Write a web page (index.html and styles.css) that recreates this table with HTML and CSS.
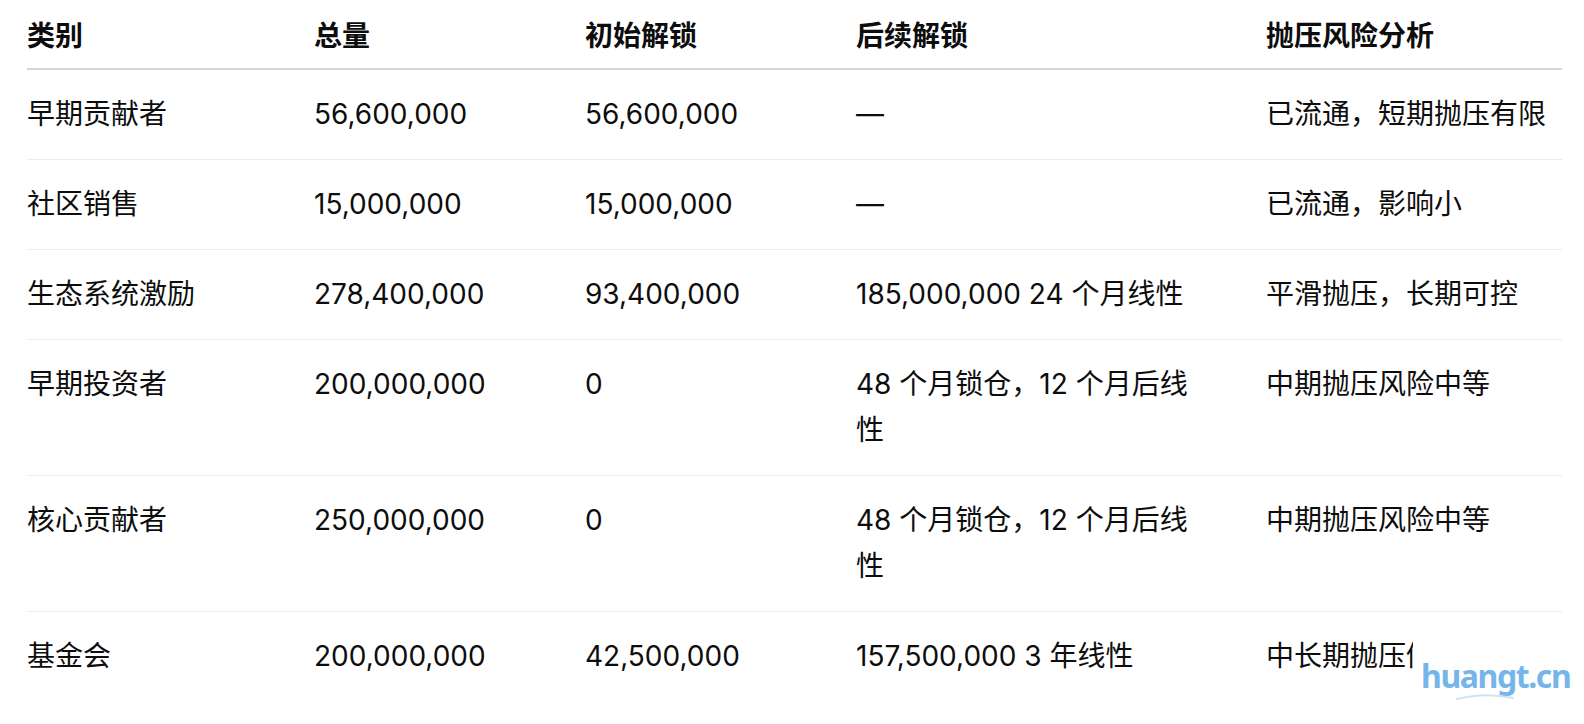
FILE: index.html
```html
<!DOCTYPE html>
<html lang="zh-CN">
<head>
<meta charset="utf-8">
<link rel="stylesheet" href="styles.css">
</head>
<body>
<div class="page">
  <table class="tokens">
    <colgroup>
      <col class="c1"><col class="c2"><col class="c3"><col class="c4"><col class="c5">
    </colgroup>
    <thead>
      <tr><th>类别</th><th>总量</th><th>初始解锁</th><th>后续解锁</th><th>抛压风险分析</th></tr>
    </thead>
    <tbody>
      <tr><td>早期贡献者</td><td>56,600,000</td><td>56,600,000</td><td>—</td><td>已流通，短期抛压有限</td></tr>
      <tr><td>社区销售</td><td>15,000,000</td><td>15,000,000</td><td>—</td><td>已流通，影响小</td></tr>
      <tr><td>生态系统激励</td><td>278,400,000</td><td>93,400,000</td><td>185,000,000 24 个月线性</td><td>平滑抛压，长期可控</td></tr>
      <tr><td>早期投资者</td><td>200,000,000</td><td>0</td><td>48 个月锁仓，12 个月后线性</td><td>中期抛压风险中等</td></tr>
      <tr><td>核心贡献者</td><td>250,000,000</td><td>0</td><td>48 个月锁仓，12 个月后线性</td><td>中期抛压风险中等</td></tr>
      <tr><td>基金会</td><td>200,000,000</td><td>42,500,000</td><td>157,500,000 3 年线性</td><td>中长期抛压仍存</td></tr>
    </tbody>
  </table>
  <div class="watermark">
    <span class="wm-text">huangt.cn</span>
    <svg class="wm-arc" width="60" height="8" viewBox="0 0 60 8"><path d="M2 7 Q30 0 58 6" fill="none" stroke="#cfe3f5" stroke-width="2" stroke-linecap="round"/></svg>
  </div>
</div>
</body>
</html>
```
FILE: styles.css
```css
html, body {
  margin: 0;
  padding: 0;
  background: #ffffff;
}
.page {
  position: relative;
  width: 1584px;
  height: 724px;
  overflow: hidden;
  padding-left: 27px;
  box-sizing: border-box;
}
.tokens {
  width: 1535px;
  table-layout: fixed;
  border-collapse: collapse;
  font-family: Inter, "Noto Sans CJK SC", sans-serif;
  font-size: 28px;
  line-height: 46px;
  color: #0d0d0d;
}
.c1 { width: 287px; }
.c2 { width: 271px; }
.c3 { width: 271px; }
.c4 { width: 410px; }
.c5 { width: 296px; }
.tokens th {
  text-align: left;
  font-weight: 700;
  padding: 13px 56px 9px 0;
  border-bottom: 2px solid #d6d6d6;
}
.tokens td {
  padding: 21px 56px 22px 0;
  border-bottom: 1px solid #ececec;
  vertical-align: top;
}
.tokens tbody tr:last-child td {
  border-bottom: none;
}
.tokens th:nth-child(4),
.tokens td:nth-child(4) {
  padding-right: 64px;
}
.tokens th:last-child,
.tokens td:last-child {
  padding-right: 0;
  white-space: nowrap;
}
.watermark {
  position: absolute;
  left: 1413px;
  top: 634px;
  width: 171px;
  height: 90px;
  padding: 22px 0 0 8px;
  box-sizing: border-box;
  background: #ffffff;
}
.wm-text {
  display: block;
  font-family: "Noto Sans", sans-serif;
  font-weight: 700;
  font-size: 32px;
  line-height: 40px;
  letter-spacing: -1.4px;
  color: #76b5ea;
}
.wm-arc {
  position: absolute;
  left: 42px;
  top: 58px;
}
```
